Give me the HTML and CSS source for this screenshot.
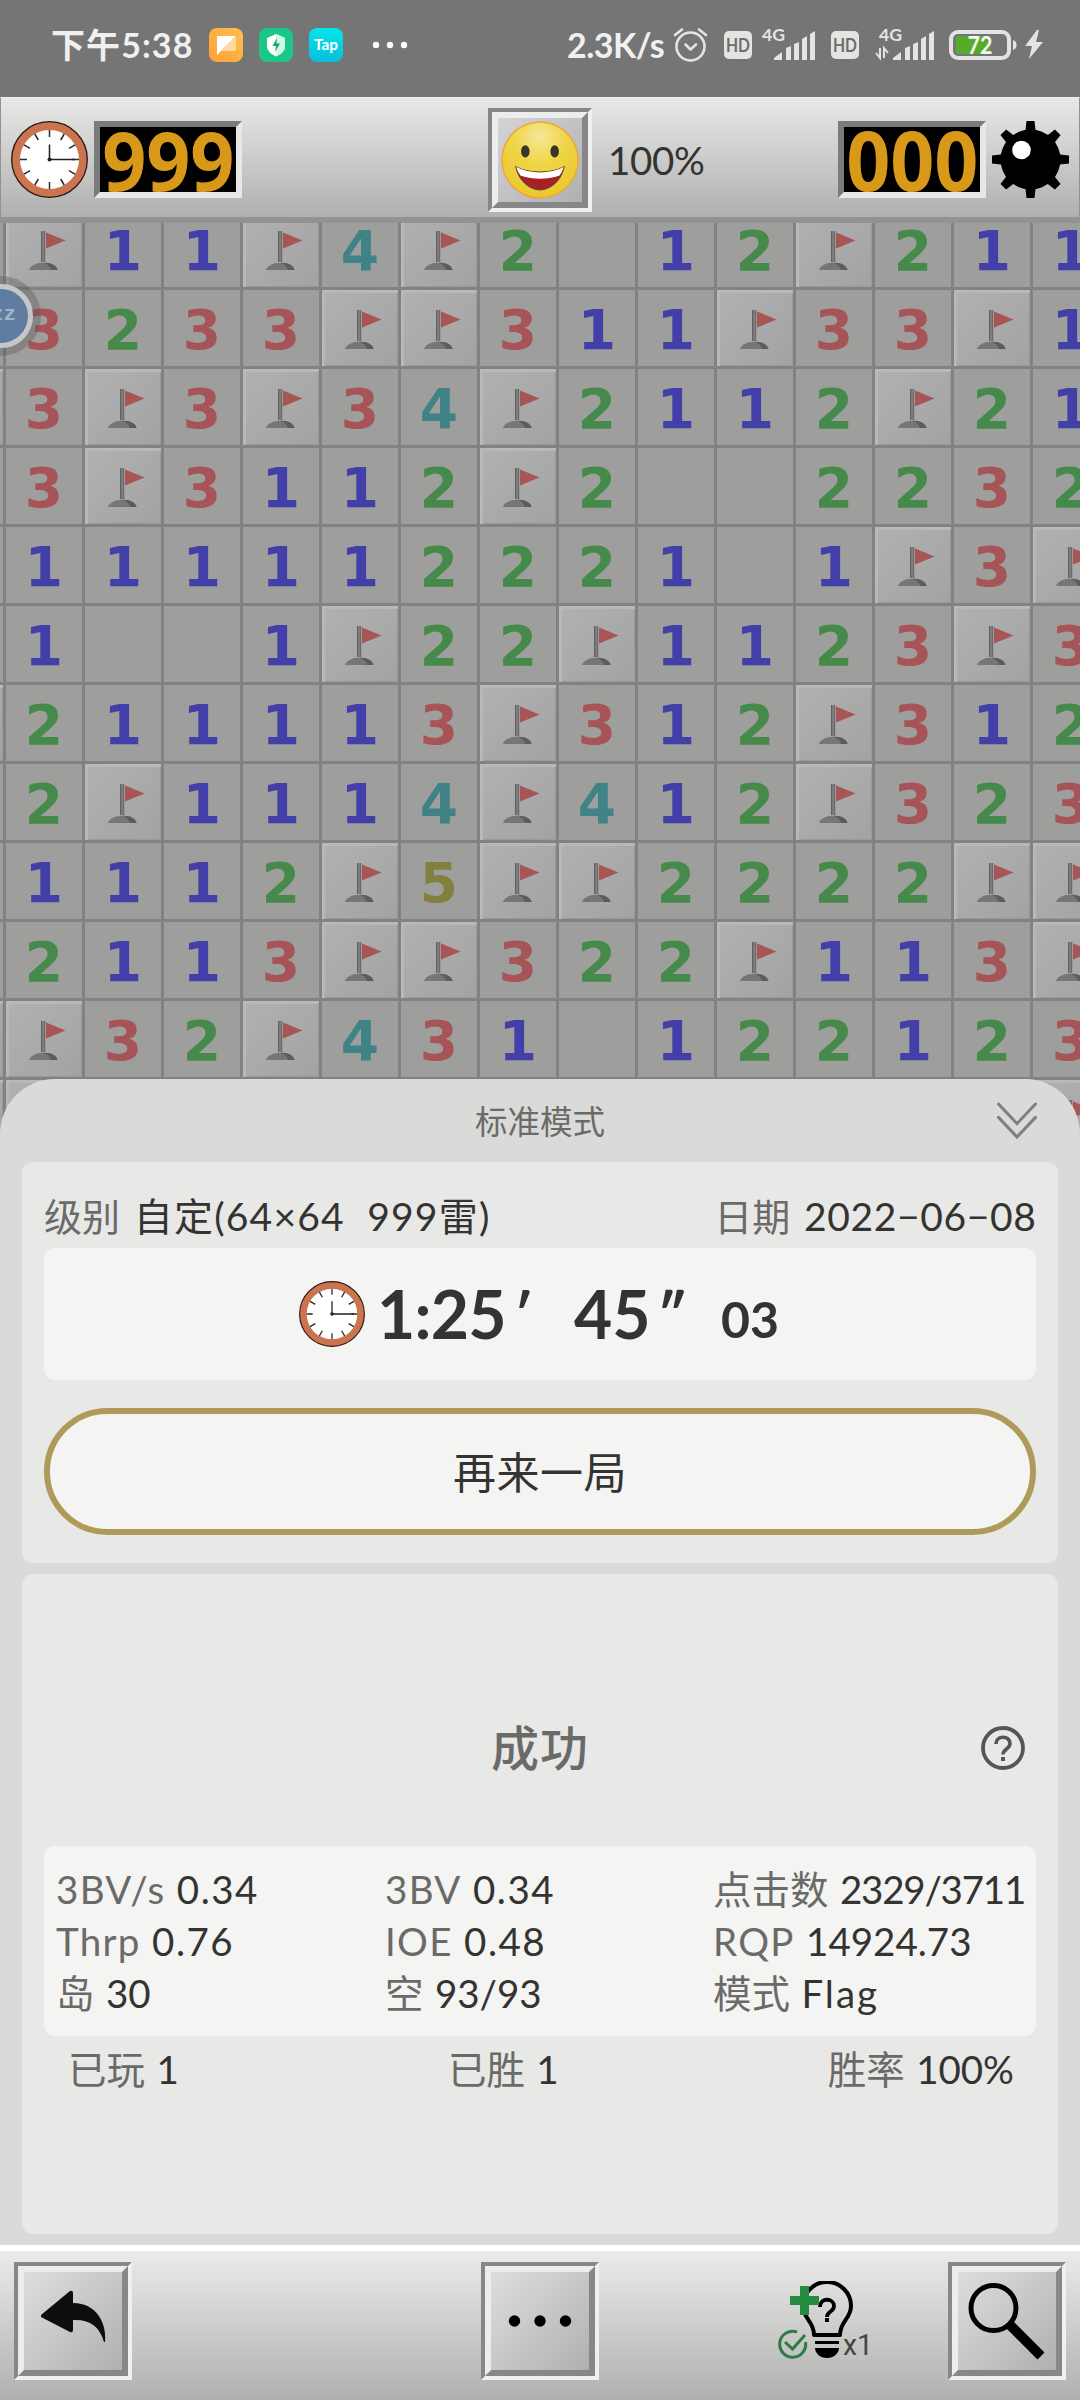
FILE: index.html
```html
<!DOCTYPE html>
<html lang="zh-CN">
<head>
<meta charset="utf-8">
<title>扫雷</title>
<link rel="stylesheet" href="styles.css">
</head>
<body>
<svg width="0" height="0" class="defs" aria-hidden="true">
  <defs>
    <radialGradient id="face" cx="50%" cy="20%" r="80%"><stop offset="0" stop-color="#f6e79a"/><stop offset=".45" stop-color="#efd544"/><stop offset="1" stop-color="#eac730"/></radialGradient>
    <linearGradient id="pole"><stop offset="0" stop-color="#555"/><stop offset=".5" stop-color="#888"/><stop offset="1" stop-color="#5c5c5c"/></linearGradient>
    <linearGradient id="orange" x1="1" y1="0" x2="0" y2="1"><stop offset="0" stop-color="#ffc04e"/><stop offset="1" stop-color="#ff9f38"/></linearGradient>
    <linearGradient id="tap" x1="0" y1="0" x2="0" y2="1"><stop offset="0" stop-color="#03e6ea"/><stop offset="1" stop-color="#0bbcdc"/></linearGradient>
    <symbol id="flag" viewBox="0 0 77 77">
      <path d="M23 59c1-4 7-7.300 13.500-7.300C44 51.700 50 54 51.500 59z" fill="#767674"/>
      <path d="M38 51.800C46 51.500 51 55 51.500 59h-6.500c-1-3.500-3.500-5.500-7-7.200z" fill="#5c5c5a"/>
      <path d="M35 20h4.200v31h-4.200z" fill="url(#pole)"/>
      <path d="M40 21.500l19.500 8L40 37.500z" fill="#a85555"/>
    </symbol>
    <symbol id="clock" viewBox="0 0 77 77">
      <circle cx="38.500" cy="38.500" r="37.800" fill="#ca7550" stroke="#2c1712" stroke-width="1.300"/>
      <circle cx="38.500" cy="38.500" r="29.500" fill="#fff"/>
      <path d="M38.500 9v7M38.500 61v7M9 38.500h7M61 38.500h7M23.800 13l3.500 6M49.700 58l3.500 6M13 23.800l6 3.500M58 49.700l6 3.500M53.200 13l-3.500 6M27.300 58l-3.500 6M64 23.800l-6 3.500M19 49.700l-6 3.500" stroke="#2a2a2a" stroke-width="1.500"/>
      <path d="M38.500 23.500v15H64" fill="none" stroke="#2a1c1c" stroke-width="1.500"/>
      <circle cx="38.500" cy="38.500" r="2" fill="#2a1c1c"/>
    </symbol>
    <symbol id="hd" viewBox="0 0 28 28">
      <rect width="28" height="28" rx="5" fill="#e4e4e4"/>
      <text x="14" y="20.800" text-anchor="middle" textLength="24" lengthAdjust="spacingAndGlyphs" class="hd-label">HD</text>
    </symbol>
    <symbol id="bars" viewBox="0 0 41 29">
      <path d="M0 29v-2l8-6v8zM12 29V17l5-2v14zM20 29V13l5-2v18zM28 29V8l5-3v24zM36 29V3l5-3v29z" fill="#e4e4e4"/>
    </symbol>
  </defs>
</svg>
<div class="screen">
  <header class="status">
    <div class="status-left">
      <span class="status-time">下午5:38</span>
      <svg class="app" viewBox="0 0 34 34"><rect width="34" height="34" rx="8" fill="url(#orange)"/><path d="M8 8h19L8 27z" fill="#fff"/><path d="M27 9v12c0 1-1 2-2 2H12z" fill="#ffd9a5"/></svg>
      <svg class="app" viewBox="0 0 34 34"><rect width="34" height="34" rx="8" fill="#1bc689"/><path d="M17 6l9 4v8c0 5-4 8-9 10.500C12 26 8 23 8 18v-8z" fill="#fff"/><path d="M17 6l9 4v8c0 5-4 8-9 10.500z" fill="#cdf9e5"/><path d="M18 10l-4.500 8H17l-1 6 5-8.500h-3.500z" fill="#17a673"/></svg>
      <svg class="app" viewBox="0 0 34 34"><rect width="34" height="34" rx="8" fill="url(#tap)"/><text x="17" y="22" text-anchor="middle" textLength="24" lengthAdjust="spacingAndGlyphs" class="tap-label">Tap</text></svg>
      <svg class="more" viewBox="0 0 34 34" fill="#fff"><circle cx="3" cy="17" r="3.200"/><circle cx="17" cy="17" r="3.200"/><circle cx="31" cy="17" r="3.200"/></svg>
    </div>
    <div class="status-right">
      <span class="speed">2.3K/s</span>
      <svg class="alarm" viewBox="0 0 34 34" fill="none" stroke="#e4e4e4" stroke-width="2.600" stroke-linecap="round" stroke-linejoin="round"><circle cx="17.500" cy="18.500" r="14"/><path d="M12.500 16.500l5 5 5.500-5M2 7l7-5.500M33 7l-7-5.500"/></svg>
      <svg class="hd"><use href="#hd"/></svg>
      <svg class="signal" viewBox="0 0 58 34"><text x="1" y="13" textLength="23" lengthAdjust="spacingAndGlyphs" class="net-label">4G</text><use href="#bars" x="13" y="3" width="41" height="29"/></svg>
      <svg class="hd hd-two"><use href="#hd"/></svg>
      <svg class="signal signal-two" viewBox="0 0 58 34"><text x="3" y="13" textLength="23" lengthAdjust="spacingAndGlyphs" class="net-label">4G</text><path d="M0 25l4 5V20M8 30V20l4 5" fill="none" stroke="#e4e4e4" stroke-width="2"/><use href="#bars" x="17" y="3" width="41" height="29"/></svg>
      <svg class="battery" viewBox="0 0 96 34"><rect x="2" y="4" width="58" height="26" rx="7" fill="none" stroke="#e4e4e4" stroke-width="4"/><rect x="7" y="8" width="34" height="18" rx="3" fill="#55ad27"/><path d="M64 12v10q3.500-1 3.500-5t-3.500-5z" fill="#e4e4e4"/><text x="31" y="25.500" text-anchor="middle" textLength="25" lengthAdjust="spacingAndGlyphs" class="battery-label">72</text><path d="M88 2L76 18h7l-3 13 14-17h-7l3-12z" fill="#e4e4e4"/></svg>
    </div>
  </header>

  <div class="toolbar">
    <div class="counter">
      <svg class="tool-icon"><use href="#clock"/></svg>
      <span class="led"><span>999</span></span>
    </div>
    <div class="face-group">
      <button class="bevel face-btn"><svg viewBox="0 0 77 77" width="78" height="78"><circle cx="38.500" cy="38.500" r="37.500" fill="url(#face)" stroke="#e9a93c" stroke-width="1.500"/><ellipse cx="24" cy="30" rx="4.200" ry="6" fill="#3b3524"/><ellipse cx="53" cy="30" rx="4.200" ry="6" fill="#3b3524"/><path d="M14.500 45C28 52 49 52 62.500 45 59 60 48 68 38.500 68S18 60 14.500 45z" fill="#a91e28" stroke="#5a4a20" stroke-width="1"/><path d="M15 45.500C28 52.500 49 52.500 62 45.500q-1.500 5-4.500 8.500C45 58 32 58 19.500 54q-3-3.500-4.500-8.500z" fill="#fff"/></svg></button>
      <span class="progress">100%</span>
    </div>
    <div class="counter">
      <span class="led"><span>000</span></span>
      <svg class="tool-icon" viewBox="0 0 77 77"><circle cx="38.500" cy="38.500" r="30" fill="#000"/><g fill="#000"><path id="tooth" d="M29.500 14L33.500 9 34.500 0h8l1 9 4 5z"/><use href="#tooth" transform="rotate(45 38.500 38.500)"/><use href="#tooth" transform="rotate(90 38.500 38.500)"/><use href="#tooth" transform="rotate(135 38.500 38.500)"/><use href="#tooth" transform="rotate(180 38.500 38.500)"/><use href="#tooth" transform="rotate(225 38.500 38.500)"/><use href="#tooth" transform="rotate(270 38.500 38.500)"/><use href="#tooth" transform="rotate(315 38.500 38.500)"/></g><circle cx="29.500" cy="29" r="9.300" fill="#fff"/></svg>
    </div>
  </div>

  <main class="field">
    <div class="board" id="board"></div>
    <div class="bubble"><span>zz</span></div>
  </main>

  <section class="sheet">
    <div class="sheet-head">
      <span class="mode">标准模式</span>
      <svg class="chevrons" viewBox="0 0 40 36" fill="none" stroke="#808080" stroke-width="3" stroke-linecap="round" stroke-linejoin="miter"><path d="M2 2l18 19L38 2M2 15l18 19 18-19"/></svg>
    </div>
    <div class="card result">
      <div class="meta"><span><i>级别</i> <b class="level">自定(64×64&nbsp; 999雷)</b></span><span><i>日期</i> <b class="date">2022−06−08</b></span></div>
      <div class="time">
        <svg class="time-clock"><use href="#clock"/></svg>
        <span class="t-min">1:25</span><span class="t-prime">′</span><span class="t-sec">45</span><span class="t-dprime">″</span><span class="t-cs">03</span>
      </div>
      <button class="again">再来一局</button>
    </div>
    <div class="card stats">
      <div class="outcome">
        <span>成功</span>
        <svg class="help" viewBox="0 0 44 44"><circle cx="22" cy="22" r="20" fill="none" stroke="#555" stroke-width="3.800"/><path d="M15 18c0-9 14-9 14-.500 0 5.500-7 5.500-7 11" fill="none" stroke="#555" stroke-width="3.600"/><path d="M20 31h4v4h-4z" fill="#555"/></svg>
      </div>
      <div class="grid">
        <span><i class="latin">3BV/s</i> <b class="dec">0.34</b></span><span><i class="latin">3BV</i> <b class="dec">0.34</b></span><span><i>点击数</i> <b class="clicks">2329/3711</b></span>
        <span><i class="latin">Thrp</i> <b class="dec">0.76</b></span><span><i class="latin">IOE</i> <b class="dec">0.48</b></span><span><i class="latin">RQP</i> <b>14924.73</b></span>
        <span><i>岛</i> <b>30</b></span><span><i>空</i> <b>93/93</b></span><span><i>模式</i> <b class="word">Flag</b></span>
      </div>
      <div class="totals"><span><i>已玩</i> <b>1</b></span><span><i>已胜</i> <b>1</b></span><span><i>胜率</i> <b>100%</b></span></div>
    </div>
  </section>

  <footer class="bottom">
    <button class="bevel big"><svg viewBox="0 0 98 98"><path d="M17 43L46 19q3-1 3 2v10C73 31 83 52 81 70h-1C76 55 66 47 49 48v10q0 3-3 2L17 45z" fill="#0d0d0d"/></svg></button>
    <button class="bevel big middle"><svg viewBox="0 0 98 98"><circle cx="23.500" cy="49" r="5.700"/><circle cx="49" cy="49" r="5.700"/><circle cx="74.500" cy="49" r="5.700"/></svg></button>
    <svg class="hint" viewBox="0 0 96 80">
      <path d="M36 54c0-14-11-16-11-29a24 24 0 0 1 48 0c0 13-11 15-11 29z" fill="none" stroke="#000" stroke-width="4" stroke-linejoin="round"/>
      <path d="M37 60h24v3H37zM37 67h24c0 5-5 10-12 10s-12-5-12-10z" fill="#000"/>
      <path d="M42 26c0-10 14-9 14-1 0 6-7 5-7 11" fill="none" stroke="#000" stroke-width="3.800"/><path d="M47 37h4v4h-4z"/>
      <path d="M22 5h9v10h10v9H31v10h-9V24H12v-9h10z" fill="#238c3f"/>
      <path d="M19 51A13 13 0 1 0 27.500 61M7 61l7.500 7L27 54" fill="none" stroke="#2c7d45" stroke-width="3"/>
      <text x="65" y="74" class="hint-label" textLength="30" lengthAdjust="spacingAndGlyphs">x1</text>
    </svg>
    <button class="bevel big"><svg viewBox="0 0 98 98"><circle cx="35.500" cy="36" r="22.500" fill="none" stroke="#000" stroke-width="5"/><path d="M51 52L83 84" stroke="#000" stroke-width="10"/></svg></button>
  </footer>
</div>
<script src="board.js"></script>
</body>
</html>
```
FILE: board.js
```javascript
// F = flag, . = open and empty, digits = neighbouring mines
const rows = [
  '.F11F4F2.12F211',
  '.3233FF311F33F1',
  'F3F3F34F2112F21',
  '.3F3112F2..2232',
  '.111112221.1F3F',
  '.1..1F22F1123F3',
  'F211113F312F312',
  '.2F1114F412F323',
  '.1112F5FF2222FF',
  '.2113FF322F113F',
  'FF32F431.122123',
  'FFFFFFFFFFFFFFF'
];
const board = document.getElementById('board');
board.innerHTML = rows.map(row => [...row].map(c => {
  if (c === 'F') return '<div class="cell raised"><svg><use href="#flag"/></svg></div>';
  if (c === '.') return '<div class="cell"></div>';
  return `<div class="cell n${c}">${c}</div>`;
}).join('')).join('');
```
FILE: styles.css
```css
* { box-sizing: border-box; }
body { margin: 0; background: #dadad8; font-family: Lato, "Noto Sans CJK SC", sans-serif; color: #333331; }
i, b { font-style: normal; font-weight: 400; }
i { color: #6a6a68; }
button { appearance: none; padding: 0; font: inherit; color: inherit; }
svg { display: block; flex: none; }
.defs { position: absolute; }
.screen { width: 1080px; height: 2400px; overflow: hidden; display: flex; flex-direction: column; }

.status { height: 97px; flex: none; background: #757575; display: flex; justify-content: space-between; align-items: center; padding: 0 36px 7px 51px; color: #f0f0f0; }
.status svg { overflow: visible; }
.status-left, .status-right { display: flex; align-items: center; }
.status-time { width: 142px; font-size: 34px; font-weight: 700; line-height: 40px; white-space: nowrap; letter-spacing: 1.1px; }
.app { width: 34px; height: 34px; margin-left: 16px; }
.more { width: 34px; height: 34px; margin-left: 30px; }
.tap-label { font: 700 16px Lato, sans-serif; fill: #fff; }
.speed { width: 98px; font-size: 34px; font-weight: 700; line-height: 40px; white-space: nowrap; letter-spacing: -.500px; }
.alarm { width: 34px; height: 34px; margin-left: 8px; }
.hd { width: 28px; height: 28px; margin-left: 17px; }
.hd-label { font: 700 19px Lato, sans-serif; fill: #6d6d6d; }
.net-label { font: 700 17px Lato, sans-serif; fill: #e4e4e4; }
.signal { width: 58px; height: 34px; margin-left: 9px; }
.hd-two { margin-left: 12px; }
.signal-two { margin-left: 17px; }
.battery { width: 96px; height: 34px; margin-left: 15px; margin-right: -1px; }
.battery-label { font: 700 24px Lato, sans-serif; fill: #f4f4f4; }

.toolbar { height: 120px; flex: none; display: grid; grid-template-columns: 477px auto 1fr; align-items: center; padding: 4px 10px 0; background: linear-gradient(#e8e8e6, #b0b0b0); border: solid #929292; border-width: 0 1px; border-top: 1px solid #f0f0f0; }
.counter { display: flex; gap: 6px; }
.counter:last-child { justify-content: flex-end; }
.tool-icon { width: 77px; height: 77px; }
.led { width: 148px; height: 77px; border: 6px solid; border-color: #7b7b7b #e8e8e8 #e8e8e8 #7b7b7b; background: #000; color: #d8981a; font: 700 82px/65px "Open Sans", sans-serif; display: flex; justify-content: center; }
.led span { transform: scaleX(.94); }
.face-group { display: flex; align-items: center; gap: 16px; }
.bevel { width: 104px; height: 104px; flex: none; border: 4px solid; border-color: #878787 #f0f0f0 #f0f0f0 #878787; display: flex; background: none; }
.bevel svg { border: 6px solid; border-color: #ededed #878787 #878787 #ededed; width: 96px; height: 96px; background: linear-gradient(135deg, #dedede, #b0b0b0); }
.face-btn svg { padding: 3px; background: linear-gradient(135deg, #d4d4d6, #b0b0b2); }
.progress { font-size: 38.500px; letter-spacing: -.300px; }

.field { height: 918px; margin-bottom: -56px; flex: none; position: relative; border-top: 6px solid #929292; overflow: hidden; }
.board { display: grid; grid-template-columns: repeat(15, 79px); grid-auto-rows: 79px; margin: -12px 0 0 -73px; }
.cell { background: #9e9e9c; border: solid #828280; border-width: 0 3px 3px 0; font: 700 55px/80px "DejaVu Sans", sans-serif; text-align: center; }
.raised { background: linear-gradient(135deg, #b1b1b1, #a3a3a3); box-shadow: inset 3px 3px 1px #b9b9b9, inset -1px -1px 1px #999; }
.raised svg { width: 77px; height: 77px; }
.n1 { color: #423fa8; } .n2 { color: #458a4a; } .n3 { color: #a65457; } .n4 { color: #3f8387; } .n5 { color: #83803d; }
.bubble { position: absolute; left: -39px; top: 53px; width: 80px; height: 80px; border-radius: 50%; border: 8px solid rgba(90,90,90,.4); display: flex; opacity: .95; }
.bubble span { flex: 1; border-radius: 50%; border: 5px solid #c8cacc; background: #5d7ba2; color: #a4b4c8; font: 700 21px/52px "Liberation Mono", monospace; text-align: right; padding-right: 12px; }

.sheet { position: relative; flex: none; height: 1166px; background: #dadad8; border-radius: 55px 55px 0 0; padding: 0 22px; display: flex; flex-direction: column; }
.sheet-head { height: 83px; display: grid; grid-template-columns: 1fr auto 1fr; align-items: center; }
.mode { grid-column: 2; font-size: 32.500px; color: #6a6a68; padding-bottom: 3px; }
.chevrons { width: 42px; height: 37px; justify-self: end; margin-right: 20px; }
.card { background: #e8e8e6; border-radius: 11px; padding: 0 22px; }
.result { height: 401px; padding-top: 27px; }
.meta { display: flex; justify-content: space-between; height: 59px; line-height: 55px; font-size: 38px; white-space: nowrap; }
.meta b { font-size: 39px; margin-left: 4px; }
.level { letter-spacing: 1.200px; }
.date { letter-spacing: .650px; margin-right: -.650px; }
.time { height: 132px; background: #f4f4f2; border-radius: 11px; display: flex; align-items: center; padding-left: 255px; font-size: 66px; font-weight: 700; line-height: 80px; }
.time-clock { width: 66px; height: 66px; }
.time span { white-space: nowrap; }
.t-min { width: 139px; padding-left: 12px; letter-spacing: -.800px; }
.time .t-prime { width: 70px; padding-left: 10px; font-size: 56px; }
.t-sec { width: 83px; }
.time .t-dprime { width: 64px; font-size: 56px; }
.time .t-cs { font-size: 50px; padding-top: 9px; }
.again { width: 992px; height: 127px; margin-top: 28px; border: 6px solid #ae9b5a; border-radius: 64px; background: #f4f4f2; font-size: 43px; letter-spacing: .500px; padding-bottom: 4px; }
.stats { height: 660px; margin-top: 11px; padding-top: 144px; }
.outcome { display: grid; grid-template-columns: 1fr auto 1fr; align-items: center; height: 60px; font-size: 48px; font-weight: 500; color: #6a6a68; }
.outcome span { grid-column: 2; line-height: 60px; letter-spacing: 1px; }
.help { width: 44px; height: 44px; justify-self: end; margin-right: 11px; }
.grid { height: 190px; margin-top: 68px; background: #f4f4f2; border-radius: 11px; padding: 17px 0 0 12px; display: grid; grid-template-columns: 329px 328px 1fr; grid-auto-rows: 52px; line-height: 52px; font-size: 38.500px; white-space: nowrap; }
.grid b, .totals b { margin-left: 1.500px; }
.latin { letter-spacing: 1.300px; }
.dec { letter-spacing: 1.500px; }
.clicks { letter-spacing: -1.200px; }
.word { letter-spacing: 2px; }
.totals { height: 60px; margin-top: 7px; line-height: 52px; font-size: 38.500px; padding: 0 22px 0 24px; display: flex; justify-content: space-between; }

.bottom { height: 155px; flex: none; border-top: 6px solid #fff; background: linear-gradient(#ebebe9, #b0b0b0); display: flex; padding: 11px 14px 0; }
.big { width: 118px; height: 118px; }
.big svg { width: 110px; height: 110px; }
.middle { margin-left: 349px; }
.hint { width: 96px; height: 80px; margin: 19px 74px 0 179px; }
.hint-label { font: 400 29px Roboto, sans-serif; fill: #444; }
```
